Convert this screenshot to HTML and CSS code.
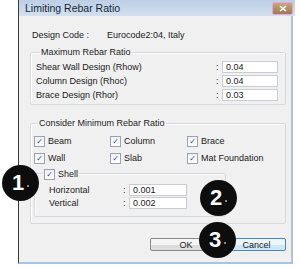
FILE: index.html
```html
<!DOCTYPE html>
<html lang="en">

<head>
    <meta charset="UTF-8">
    <meta name="viewport" content="width=device-width, initial-scale=1.0">
    <title>Limiting Rebar Ratio</title>
    <link rel="stylesheet" href="styles.css">
</head>

<body>

    <div class="screen">
        <div class="window">
            <div class="titlebar">
                <span class="title">Limiting Rebar Ratio</span>
                <span class="close-btn">
                    <svg width="8" height="7" viewBox="0 0 8 7">
                        <path d="M1 1 L7 6 M7 1 L1 6" stroke="#fff" stroke-width="1.6" />
                    </svg>
                </span>
            </div>

            <div class="dialog">
                <div class="code-row">
                    <span class="code-label">Design Code :</span>
                    <span>Eurocode2:04, Italy</span>
                </div>

                <fieldset class="group max-group">
                    <legend>Maximum Rebar Ratio</legend>
                    <div class="value-row">
                        <span class="value-label">Shear Wall Design (Rhow)</span>
                        <span class="colon">:</span>
                        <span class="field">0.04</span>
                    </div>
                    <div class="value-row">
                        <span class="value-label">Column Design (Rhoc)</span>
                        <span class="colon">:</span>
                        <span class="field">0.04</span>
                    </div>
                    <div class="value-row">
                        <span class="value-label">Brace Design (Rhor)</span>
                        <span class="colon">:</span>
                        <span class="field">0.03</span>
                    </div>
                </fieldset>

                <fieldset class="group min-group">
                    <legend>Consider Minimum Rebar Ratio</legend>
                    <div class="check-grid">
                        <label class="check"><span class="box">&#10003;</span>Beam</label>
                        <label class="check"><span class="box">&#10003;</span>Column</label>
                        <label class="check"><span class="box">&#10003;</span>Brace</label>
                        <label class="check"><span class="box">&#10003;</span>Wall</label>
                        <label class="check"><span class="box">&#10003;</span>Slab</label>
                        <label class="check"><span class="box">&#10003;</span>Mat Foundation</label>
                    </div>

                    <fieldset class="shell-group">
                        <legend><label class="check"><span class="box">&#10003;</span>Shell</label></legend>
                        <div class="shell-row">
                            <span class="shell-label">Horizontal</span>
                            <span class="colon">:</span>
                            <span class="field shell-field">0.001</span>
                        </div>
                        <div class="shell-row">
                            <span class="shell-label">Vertical</span>
                            <span class="colon">:</span>
                            <span class="field shell-field">0.002</span>
                        </div>
                    </fieldset>
                </fieldset>

                <div class="buttons">
                    <button class="btn ok-btn">OK</button>
                    <button class="btn cancel-btn">Cancel</button>
                </div>
            </div>
        </div>

        <div class="bubble bubble-1">1<i></i></div>
        <div class="bubble bubble-2">2<i></i></div>
        <div class="bubble bubble-3">3<i></i></div>
    </div>

</body>

</html>
```

FILE: styles.css
```css
body {
    font-family: 'Liberation Sans', Arial, sans-serif;
    font-size: 9px;
    color: #1a1a1a;
    background-color: #fff;
    margin: 0;
    padding: 0;
}

.screen {
    position: relative;
    width: 300px;
    height: 269px;
    overflow: hidden;
}

.window {
    margin-left: 18px;
    width: 275px;
    height: 264px;
    border-left: 1px solid #3a3a3a;
    border-right: 2px solid #b8c2cc;
    border-bottom: 2px solid #a9c4e2;
    box-sizing: border-box;
    background-color: #f0f0f0;
    display: flex;
    flex-direction: column;
}

.titlebar {
    height: 16px;
    flex: none;
    display: flex;
    align-items: center;
    justify-content: space-between;
    background: linear-gradient(#bccfe4, #d3e0ee);
    margin-right: -4px;
}

.title {
    font-size: 10.5px;
    color: #15263a;
    padding-left: 6px;
}

.close-btn {
    width: 21px;
    height: 13px;
    margin-right: 2px;
    display: flex;
    align-items: center;
    justify-content: center;
    background: linear-gradient(#c9a67e, #9c7a52);
    border: 1px solid #e7a6dc;
    border-radius: 2px;
    box-sizing: border-box;
}

.dialog {
    flex: 1;
    padding: 13px 5px 0 11px;
    display: flex;
    flex-direction: column;
}

.code-row {
    height: 12px;
    display: flex;
    align-items: center;
    padding-left: 2px;
}

.code-label {
    width: 75px;
}

.group {
    margin: 0;
    padding: 0 7px 3px 5px;
    border: 1px solid #d5d9dd;
    border-radius: 2px;
    box-shadow: inset 1px 1px 0 #fff;
    min-width: 0;
}

.group legend {
    height: 10px;
    line-height: 10px;
    padding: 0 1px;
    margin-left: 4px;
}

.max-group {
    margin-top: 6px;
    display: flex;
    flex-direction: column;
    gap: 2px;
}

.value-row {
    height: 12px;
    display: flex;
    align-items: center;
}

.max-group .value-row:first-of-type {
    margin-top: 4px;
}

.value-label {
    flex: 1;
}

.colon {
    width: 6px;
}

.field {
    width: 56px;
    height: 12px;
    line-height: 11px;
    background-color: #fff;
    border: 1px solid #c9ccd1;
    box-sizing: border-box;
    padding-left: 3px;
}

.min-group {
    margin-top: 13px;
    padding: 0 7px 6px 3px;
}

.check-grid {
    margin-top: 7px;
    display: grid;
    grid-template-columns: 76px 77px auto;
    row-gap: 5px;
}

.check {
    height: 12px;
    display: flex;
    align-items: center;
}

.box {
    width: 9px;
    height: 9px;
    margin-right: 3px;
    background: linear-gradient(#eef0f3, #ffffff);
    border: 1px solid #9aa3ad;
    color: #2b4c9b;
    font-family: 'DejaVu Sans', sans-serif;
    font-size: 8px;
    font-weight: bold;
    line-height: 9px;
    text-align: center;
}

.shell-group {
    margin: 4px 0 0 0;
    width: 176px;
    padding: 0 0 7px 14px;
    border: 1px solid #d5d9dd;
    border-radius: 2px;
    box-shadow: inset 1px 1px 0 #fff;
}

.shell-group legend {
    height: 11px;
    padding: 0 1px;
    margin-left: -6px;
}

.shell-row {
    height: 12px;
    margin-top: 1px;
    display: flex;
    align-items: center;
}

.shell-row:first-of-type {
    margin-top: 5px;
}

.shell-label {
    width: 74px;
}

.shell-field {
    width: 58px;
}

.buttons {
    margin-top: 14px;
    display: flex;
    justify-content: flex-end;
    gap: 5px;
    padding-right: 0;
}

.btn {
    height: 13px;
    padding: 0;
    font-family: inherit;
    font-size: 9px;
    color: #1a1a1a;
    border-radius: 2px;
}

.ok-btn {
    width: 72px;
    border: 1px solid #8a8a8a;
    background: linear-gradient(#f4f4f4 50%, #dcdcdc 50%);
}

.cancel-btn {
    width: 59px;
    border: 1px solid #4a86c0;
    background: linear-gradient(#ecf6fc 50%, #cde8f6 50%);
}

/* numbered callouts over the dialog */
.bubble {
    position: absolute;
    width: 37px;
    height: 36px;
    border-radius: 50%;
    background-color: #0d0d0d;
    color: #fff;
    font-family: 'Liberation Sans', Arial, sans-serif;
    font-size: 22px;
    font-weight: bold;
    display: flex;
    align-items: center;
    justify-content: center;
}

.bubble i {
    width: 2px;
    height: 2px;
    margin: 6px 0 0 3px;
    background-color: #888;
}

.bubble-1 {
    left: 2px;
    top: 165px;
}

.bubble-2 {
    left: 200px;
    top: 180px;
}

.bubble-3 {
    left: 199px;
    top: 222px;
}
```
